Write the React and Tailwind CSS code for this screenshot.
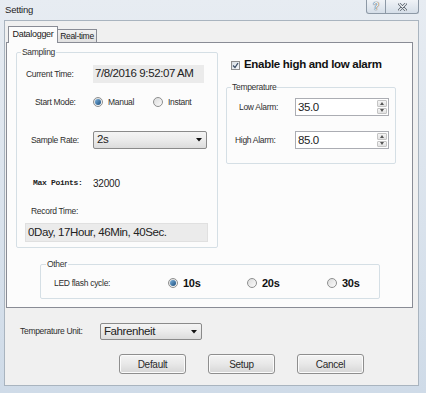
import React from 'react';

const ui = "font-['Liberation_Sans',Arial,sans-serif]";
// labels and values are narrow in the reference, so keep them a bit tighter
const lbl = "text-[8.5px] tracking-[-0.3px] text-[#2e2e2e] whitespace-nowrap";
const val = "text-[11.5px] tracking-[-0.4px] text-[#222] whitespace-nowrap";
const bold = "text-[11px] tracking-[-0.3px] font-bold text-[#111] whitespace-nowrap";
const legend = "ml-[4px] px-[1px] text-[8.5px] tracking-[-0.3px] leading-[12px] text-[#333]";

function Radio({ checked }) {
    return (
        <span className="w-[10px] h-[10px] rounded-full border border-[#8e8f8f] bg-linear-to-br from-[#dcdcdc] to-[#fbfbfb] flex items-center justify-center shrink-0">
            {checked && <span className="w-[6px] h-[6px] rounded-full bg-linear-to-br from-[#7db4e0] to-[#1b4f7d]" />}
        </span>
    );
}

function Arrow() {
    return (
        <svg width="6" height="4" viewBox="0 0 6 4">
            <path d="M0 0 L6 0 L3 3.5 Z" fill="#111" />
        </svg>
    );
}

function Select({ value, width }) {
    return (
        <div className={`${width} h-full flex items-center border border-[#8a8a8a] rounded-[2px] bg-linear-to-b from-[#f4f4f4] via-[#ebebeb] to-[#dcdcdc] pl-[3px] pr-[4px]`}>
            <span className={`${val} flex-1`}>{value}</span>
            <Arrow />
        </div>
    );
}

function Spin({ value }) {
    return (
        <div className="w-[94px] h-[18px] bg-white border border-[#abadb3] flex">
            <span className={`${val} flex-1 leading-[16px] pl-[2px]`}>{value}</span>
            <div className="w-[10px] my-[1px] mr-[1px] flex flex-col gap-px">
                <div className="flex-1 flex items-center justify-center bg-linear-to-b from-[#f5f5f5] to-[#e2e2e2] border border-[#c4c4c4] rounded-[1px]">
                    <svg width="4" height="3" viewBox="0 0 4 3"><path d="M0 3 L4 3 L2 0 Z" fill="#555" /></svg>
                </div>
                <div className="flex-1 flex items-center justify-center bg-linear-to-b from-[#f5f5f5] to-[#e2e2e2] border border-[#c4c4c4] rounded-[1px]">
                    <svg width="4" height="3" viewBox="0 0 4 3"><path d="M0 0 L4 0 L2 3 Z" fill="#555" /></svg>
                </div>
            </div>
        </div>
    );
}

function Button({ children }) {
    return (
        <button className="w-[67px] h-[20px] rounded-[3px] border border-[#8e8e8e] bg-linear-to-b from-[#f4f4f4] via-[#e8e8e8] to-[#d6d6d6] text-[10px] tracking-[-0.3px] text-[#2a2a2a] shadow-[inset_0_0_0_1px_#fbfbfb]">
            {children}
        </button>
    );
}

export default function App() {
    return (
        <div className={`${ui} w-[426px] h-[393px] overflow-hidden bg-linear-to-b from-[#e7ecf2] to-[#cfdbe8] flex flex-col`}>
            {/* Title bar */}
            <div className="h-[20px] flex items-start shrink-0">
                <span className="pl-[5px] pt-[4px] text-[9.5px] tracking-[-0.2px] leading-[12px] text-[#1e1e1e]">Setting</span>
                <div className="ml-auto mr-[7px] flex">
                    <div className="w-[20px] h-[14px] border border-t-0 border-[#8d99a6] rounded-bl-[3px] bg-linear-to-b from-[#f0f3f7] to-[#d5dee8] flex items-center justify-center text-[10px] leading-none font-bold text-[#f4f6f8] [text-shadow:0_0_1px_#3f4852,0_0_1px_#3f4852]">?</div>
                    <div className="w-[33px] h-[14px] border border-t-0 border-l-0 border-[#8d99a6] rounded-br-[3px] bg-linear-to-b from-[#f0f3f7] to-[#d5dee8] flex items-center justify-center">
                        <svg width="9" height="8" viewBox="0 0 9 8">
                            <path d="M1 0.5 L8 7.5 M8 0.5 L1 7.5" stroke="#4b5561" strokeWidth="2.6" strokeLinecap="round" />
                            <path d="M1 0.5 L8 7.5 M8 0.5 L1 7.5" stroke="#f4f6f8" strokeWidth="1.2" strokeLinecap="round" />
                        </svg>
                    </div>
                </div>
            </div>

            {/* Client area */}
            <div className="ml-[4px] w-[415px] h-[366px] bg-[#f0f0f0] border border-[#a9b4bf] shrink-0">
                {/* Tabs */}
                <div className="pt-[5px] ml-[3px] flex items-end">
                    <div className="relative z-10 w-[50px] h-[17px] bg-[#fcfcfc] border border-b-0 border-[#898c95] text-[9px] tracking-[-0.3px] text-[#1a1a1a] whitespace-nowrap flex items-center justify-center pb-[1px]">Datalogger</div>
                    <div className="w-[39px] h-[14px] bg-linear-to-b from-[#f2f2f2] to-[#e1e1e1] border border-l-0 border-[#898c95] text-[8.5px] tracking-[-0.3px] text-[#1a1a1a] whitespace-nowrap flex items-center justify-center">Real-time</div>
                </div>

                {/* Tab page */}
                <div className="-mt-px ml-[1px] w-[407px] h-[266px] border border-[#898c95] bg-[#fcfcfc] pl-[9px] pt-[3px]">
                    <div className="flex items-start gap-[8px]">
                        {/* Sampling */}
                        <fieldset className="w-[202px] border border-[#d5dfe5] rounded-[2px] pb-[5px]">
                            <legend className={legend}>Sampling</legend>
                            <div className="mt-[7px] h-[18px] flex items-center">
                                <span className={`${lbl} w-[76px] pl-[9px]`}>Current Time:</span>
                                <span className={`${val} w-[111px] h-full bg-[#ebebeb] flex items-center pl-[2px]`}>7/8/2016 9:52:07 AM</span>
                            </div>
                            <div className="mt-[10px] h-[18px] flex items-center">
                                <span className={`${lbl} w-[76px] pl-[18px]`}>Start Mode:</span>
                                <div className="w-[60px] flex items-center">
                                    <Radio checked />
                                    <span className={`${lbl} ml-[5px]`}>Manual</span>
                                </div>
                                <Radio />
                                <span className={`${lbl} ml-[5px]`}>Instant</span>
                            </div>
                            <div className="mt-[20px] h-[18px] flex items-center">
                                <span className={`${lbl} w-[76px] pl-[14px]`}>Sample Rate:</span>
                                <Select value="2s" width="w-[114px]" />
                            </div>
                            <div className="mt-[27px] h-[14px] flex items-center">
                                <span className="w-[76px] pl-[16px] font-['Liberation_Mono',monospace] font-bold text-[8px] tracking-[-0.3px] text-[#222] whitespace-nowrap">Max Points:</span>
                                <span className="text-[10px] tracking-[-0.2px] text-[#222]">32000</span>
                            </div>
                            <div className="mt-[14px] h-[14px] flex items-center">
                                <span className={`${lbl} pl-[14px]`}>Record Time:</span>
                            </div>
                            <div className={`${val} mt-[5px] ml-[8px] w-[183px] h-[19px] bg-[#ebebeb] border border-[#e0e0e0] flex items-center pl-[2px]`}>
                                0Day, 17Hour, 46Min, 40Sec.
                            </div>
                        </fieldset>

                        {/* Alarm */}
                        <div className="w-[170px]">
                            <div className="mt-[12px] h-[14px] flex items-center">
                                <span className="ml-[5px] w-[9px] h-[9px] border border-[#8f8f8f] bg-linear-to-br from-[#d9dee4] to-[#f6f8fa] flex items-center justify-center">
                                    <svg width="7" height="7" viewBox="0 0 7 7"><path d="M1 3.5 L3 5.5 L6 1" fill="none" stroke="#3d4f66" strokeWidth="1.3" /></svg>
                                </span>
                                <span className="ml-[4px] text-[11.5px] tracking-[-0.3px] font-bold text-[#111] whitespace-nowrap">Enable high and low alarm</span>
                            </div>
                            <fieldset className="mt-[9px] border border-[#d5dfe5] rounded-[2px] pb-[14px]">
                                <legend className={legend}>Temperature</legend>
                                <div className="mt-[5px] h-[18px] flex items-center">
                                    <span className={`${lbl} w-[68px] pl-[12px]`}>Low Alarm:</span>
                                    <Spin value="35.0" />
                                </div>
                                <div className="mt-[15px] h-[18px] flex items-center">
                                    <span className={`${lbl} w-[68px] pl-[8px]`}>High Alarm:</span>
                                    <Spin value="85.0" />
                                </div>
                            </fieldset>
                        </div>
                    </div>

                    {/* Other */}
                    <fieldset className="mt-[10px] ml-[24px] w-[340px] border border-[#d5dfe5] rounded-[2px] pb-[8px]">
                        <legend className="ml-[5px] px-[1px] text-[8.5px] tracking-[-0.3px] leading-[12px] text-[#333]">Other</legend>
                        <div className="mt-[6px] h-[14px] flex items-center">
                            <span className={`${lbl} w-[127px] pl-[13px]`}>LED flash cycle:</span>
                            <div className="w-[79px] flex items-center">
                                <Radio checked />
                                <span className={`${bold} ml-[5px]`}>10s</span>
                            </div>
                            <div className="w-[80px] flex items-center">
                                <Radio />
                                <span className={`${bold} ml-[5px]`}>20s</span>
                            </div>
                            <Radio />
                            <span className={`${bold} ml-[5px]`}>30s</span>
                        </div>
                    </fieldset>
                </div>

                {/* Temperature unit */}
                <div className="mt-[15px] h-[17px] flex items-center">
                    <span className={`${lbl} ml-[15px] w-[80px]`}>Temperature Unit:</span>
                    <Select value="Fahrenheit" width="w-[102px]" />
                </div>

                {/* Buttons */}
                <div className="mt-[14px] ml-[114px] flex gap-[22px]">
                    <Button>Default</Button>
                    <Button>Setup</Button>
                    <Button>Cancel</Button>
                </div>
            </div>
        </div>
    );
}
